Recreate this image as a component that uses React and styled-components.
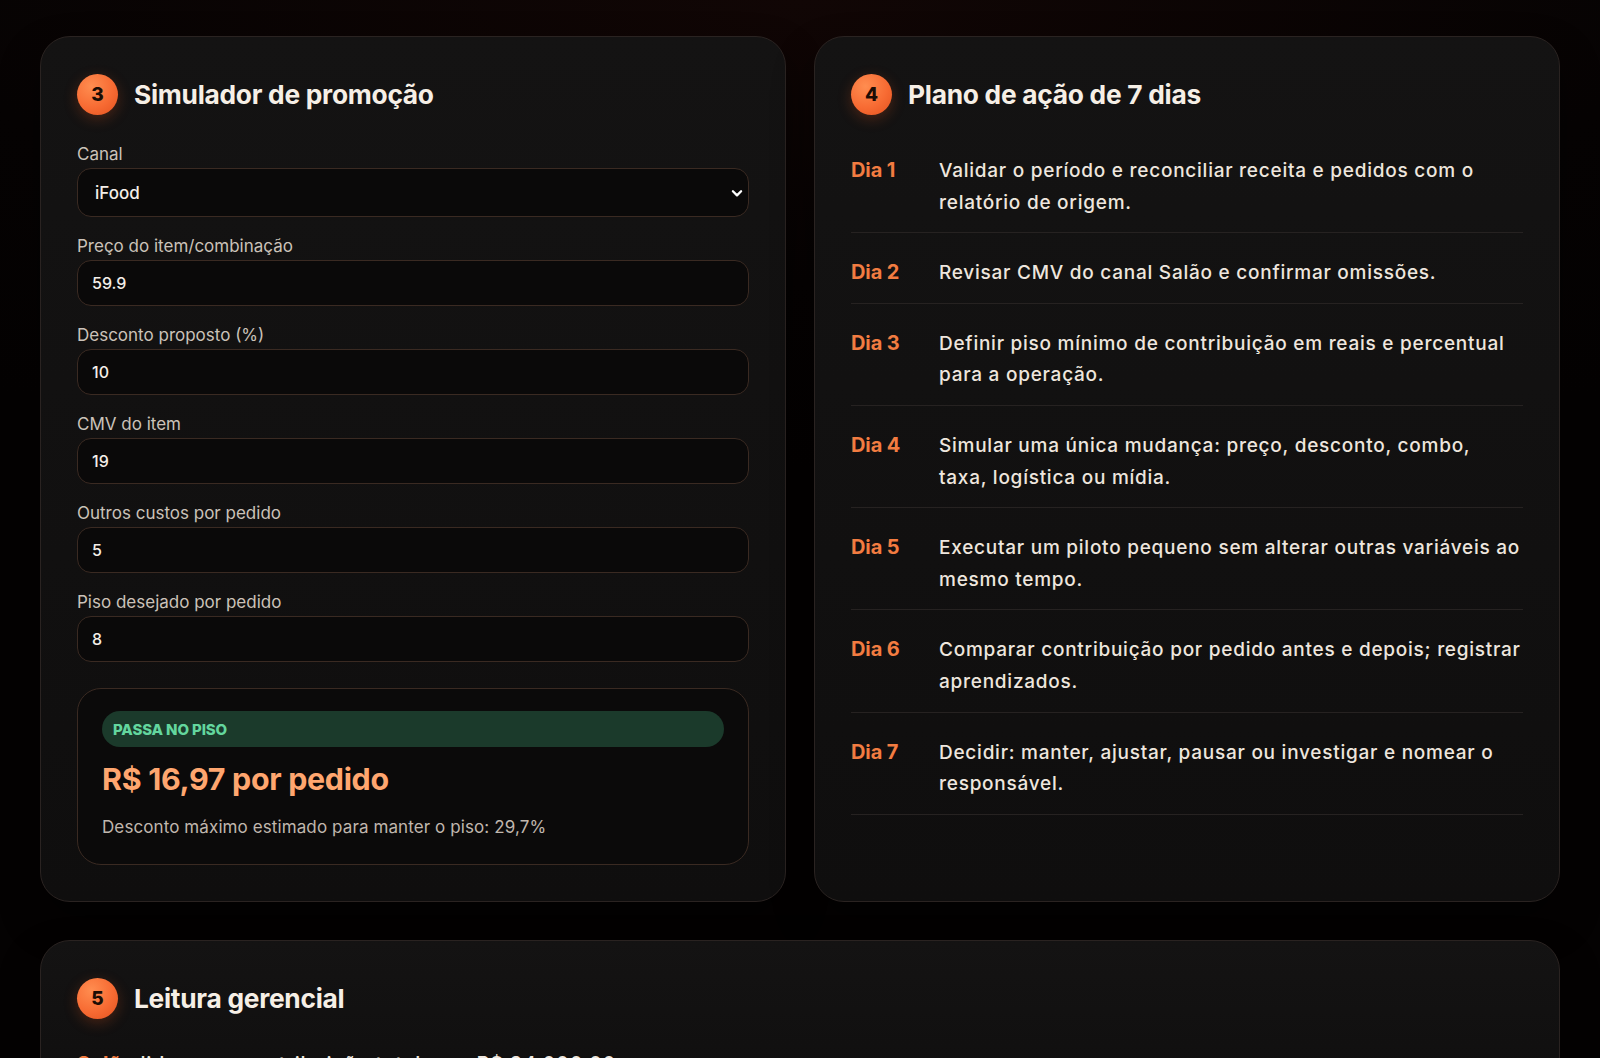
import React from "react";
import styled, { createGlobalStyle } from "styled-components";

const Global = createGlobalStyle`
  * { box-sizing: border-box; }
  html, body { margin: 0; padding: 0; }
  body {
    background: radial-gradient(ellipse 90% 40% at 50% 0%, #110605 0%, #060303 60%, #040202 100%);
    background-color: #040202;
    color: #f3ece4;
    font-family: Inter, "Noto Sans", "Liberation Sans", sans-serif;
    min-height: 100vh;
  }
`;

const Page = styled.main`
  padding: 36px 40px 60px;
`;

const Grid = styled.div`
  display: grid;
  grid-template-columns: 1fr 1fr;
  column-gap: 28px;
  row-gap: 38px;
`;

const Card = styled.section`
  grid-column: ${(p) => (p.$wide ? "1 / -1" : "auto")};
  background: linear-gradient(180deg, #141313 0%, #0f0e0e 100%);
  border: 1px solid #2a2321;
  border-radius: 30px;
  padding: 37px 36px 36px;
  box-shadow: 0 20px 40px rgba(0, 0, 0, 0.45);
`;

const Header = styled.header`
  display: flex;
  align-items: center;
  gap: 16px;
  height: 40px;
`;

const Badge = styled.span`
  width: 41px;
  height: 41px;
  border-radius: 50%;
  flex: none;
  display: flex;
  align-items: center;
  justify-content: center;
  background: radial-gradient(circle at 35% 30%, #ff8d50 0%, #f76b33 55%, #e4521f 100%);
  color: #1c0d05;
  font-weight: 800;
  font-size: 19px;
  box-shadow: 0 4px 14px rgba(240, 90, 30, 0.25);
`;

const Title = styled.h2`
  margin: 0;
  font-size: 26.3px;
  font-weight: 700;
  letter-spacing: -0.01em;
  color: #f6efe6;
`;

const Form = styled.div`
  margin-top: 30px;
  display: flex;
  flex-direction: column;
  gap: 19px;
`;

const Field = styled.label`
  display: flex;
  flex-direction: column;
  gap: 4px;
`;

const LabelText = styled.span`
  font-size: 17px;
  line-height: 20px;
  color: #cbc2b9;
  font-weight: 400;
`;

const SelectWrap = styled.div`
  position: relative;
`;

const Select = styled.select`
  appearance: none;
  -webkit-appearance: none;
  width: 100%;
  height: 49px;
  background: #0a0909;
  border: 1px solid #3a2a22;
  border-radius: 14px;
  color: #f4eee8;
  font-family: inherit;
  font-size: 17px;
  font-weight: 500;
  padding: 0 40px 0 17px;
  outline: none;
`;

const Chevron = styled.svg`
  position: absolute;
  right: 5px;
  top: 50%;
  transform: translateY(-50%);
  pointer-events: none;
`;

const Input = styled.input`
  width: 100%;
  height: 46px;
  background: #0a0909;
  border: 1px solid #3a2a22;
  border-radius: 14px;
  color: #f4eee8;
  font-family: inherit;
  font-size: 16px;
  font-weight: 500;
  padding: 0 14px;
  outline: none;
`;

const Result = styled.div`
  margin-top: 26px;
  background: #0b0a0a;
  border: 1px solid #3a2a22;
  border-radius: 24px;
  padding: 22px 24px 26px;
`;

const Pill = styled.div`
  height: 36px;
  border-radius: 999px;
  background: #1b3a2b;
  color: #63d69e;
  font-size: 15px;
  font-weight: 800;
  letter-spacing: -0.01em;
  display: flex;
  align-items: center;
  padding: 0 11px;
  text-transform: uppercase;
`;

const Price = styled.div`
  margin-top: 14px;
  font-size: 30.4px;
  line-height: 36px;
  font-weight: 700;
  color: #ffa66f;
  letter-spacing: -0.01em;
`;

const Note = styled.p`
  margin: 19px 0 0;
  font-size: 17px;
  line-height: 22px;
  letter-spacing: 0.1px;
  color: #c0b7ae;
`;

const Plan = styled.ol`
  list-style: none;
  margin: 17px 0 0;
  padding: 0;
`;

const Step = styled.li`
  display: grid;
  grid-template-columns: 88px 1fr;
  padding: 24px 0 14px;
  border-bottom: 1px solid #262221;
  font-size: 19px;
  line-height: 31.6px;
`;

const Day = styled.span`
  color: #f27c41;
  font-size: 20px;
  font-weight: 700;
  letter-spacing: -0.005em;
`;

const StepText = styled.span`
  color: #eee6de;
  font-weight: 500;
  letter-spacing: 0.75px;
`;

const Reading = styled.p`
  margin: 30px 0 0;
  font-size: 20px;
  line-height: 32px;
  letter-spacing: 0.7px;
  color: #eee6de;
  font-weight: 500;
`;

const Accent = styled.strong`
  color: #f27c41;
  font-weight: 700;
`;

const fields = [
  ["Preço do item/combinação", "59.9"],
  ["Desconto proposto (%)", "10"],
  ["CMV do item", "19"],
  ["Outros custos por pedido", "5"],
  ["Piso desejado por pedido", "8"],
];

const steps = [
  ["Dia 1", "Validar o período e reconciliar receita e pedidos com o relatório de origem."],
  ["Dia 2", "Revisar CMV do canal Salão e confirmar omissões."],
  ["Dia 3", "Definir piso mínimo de contribuição em reais e percentual para a operação."],
  ["Dia 4", "Simular uma única mudança: preço, desconto, combo, taxa, logística ou mídia."],
  ["Dia 5", "Executar um piloto pequeno sem alterar outras variáveis ao mesmo tempo."],
  ["Dia 6", "Comparar contribuição por pedido antes e depois; registrar aprendizados."],
  ["Dia 7", "Decidir: manter, ajustar, pausar ou investigar e nomear o responsável."],
];

export default function App() {
  return (
    <>
      <Global />
      <Page>
        <Grid>
          <Card>
            <Header>
              <Badge>3</Badge>
              <Title>Simulador de promoção</Title>
            </Header>
            <Form>
              <Field>
                <LabelText>Canal</LabelText>
                <SelectWrap>
                  <Select defaultValue="iFood">
                    <option>iFood</option>
                    <option>Salão</option>
                    <option>Delivery próprio</option>
                  </Select>
                  <Chevron width="14" height="14" viewBox="0 0 24 24" fill="none" stroke="#ffffff" strokeWidth="4" strokeLinecap="round" strokeLinejoin="round">
                    <path d="M5 9l7 7 7-7" />
                  </Chevron>
                </SelectWrap>
              </Field>
              {fields.map(([label, value]) => (
                <Field key={label}>
                  <LabelText>{label}</LabelText>
                  <Input defaultValue={value} />
                </Field>
              ))}
            </Form>
            <Result>
              <Pill>Passa no piso</Pill>
              <Price>R$ 16,97 por pedido</Price>
              <Note>Desconto máximo estimado para manter o piso: 29,7%</Note>
            </Result>
          </Card>

          <Card>
            <Header>
              <Badge>4</Badge>
              <Title>Plano de ação de 7 dias</Title>
            </Header>
            <Plan>
              {steps.map(([day, text]) => (
                <Step key={day}>
                  <Day>{day}</Day>
                  <StepText>{text}</StepText>
                </Step>
              ))}
            </Plan>
          </Card>

          <Card $wide>
            <Header>
              <Badge>5</Badge>
              <Title>Leitura gerencial</Title>
            </Header>
            <Reading>
              <Accent>Salão</Accent> lidera em contribuição total com R$ 94.000,00
            </Reading>
          </Card>
        </Grid>
      </Page>
    </>
  );
}
